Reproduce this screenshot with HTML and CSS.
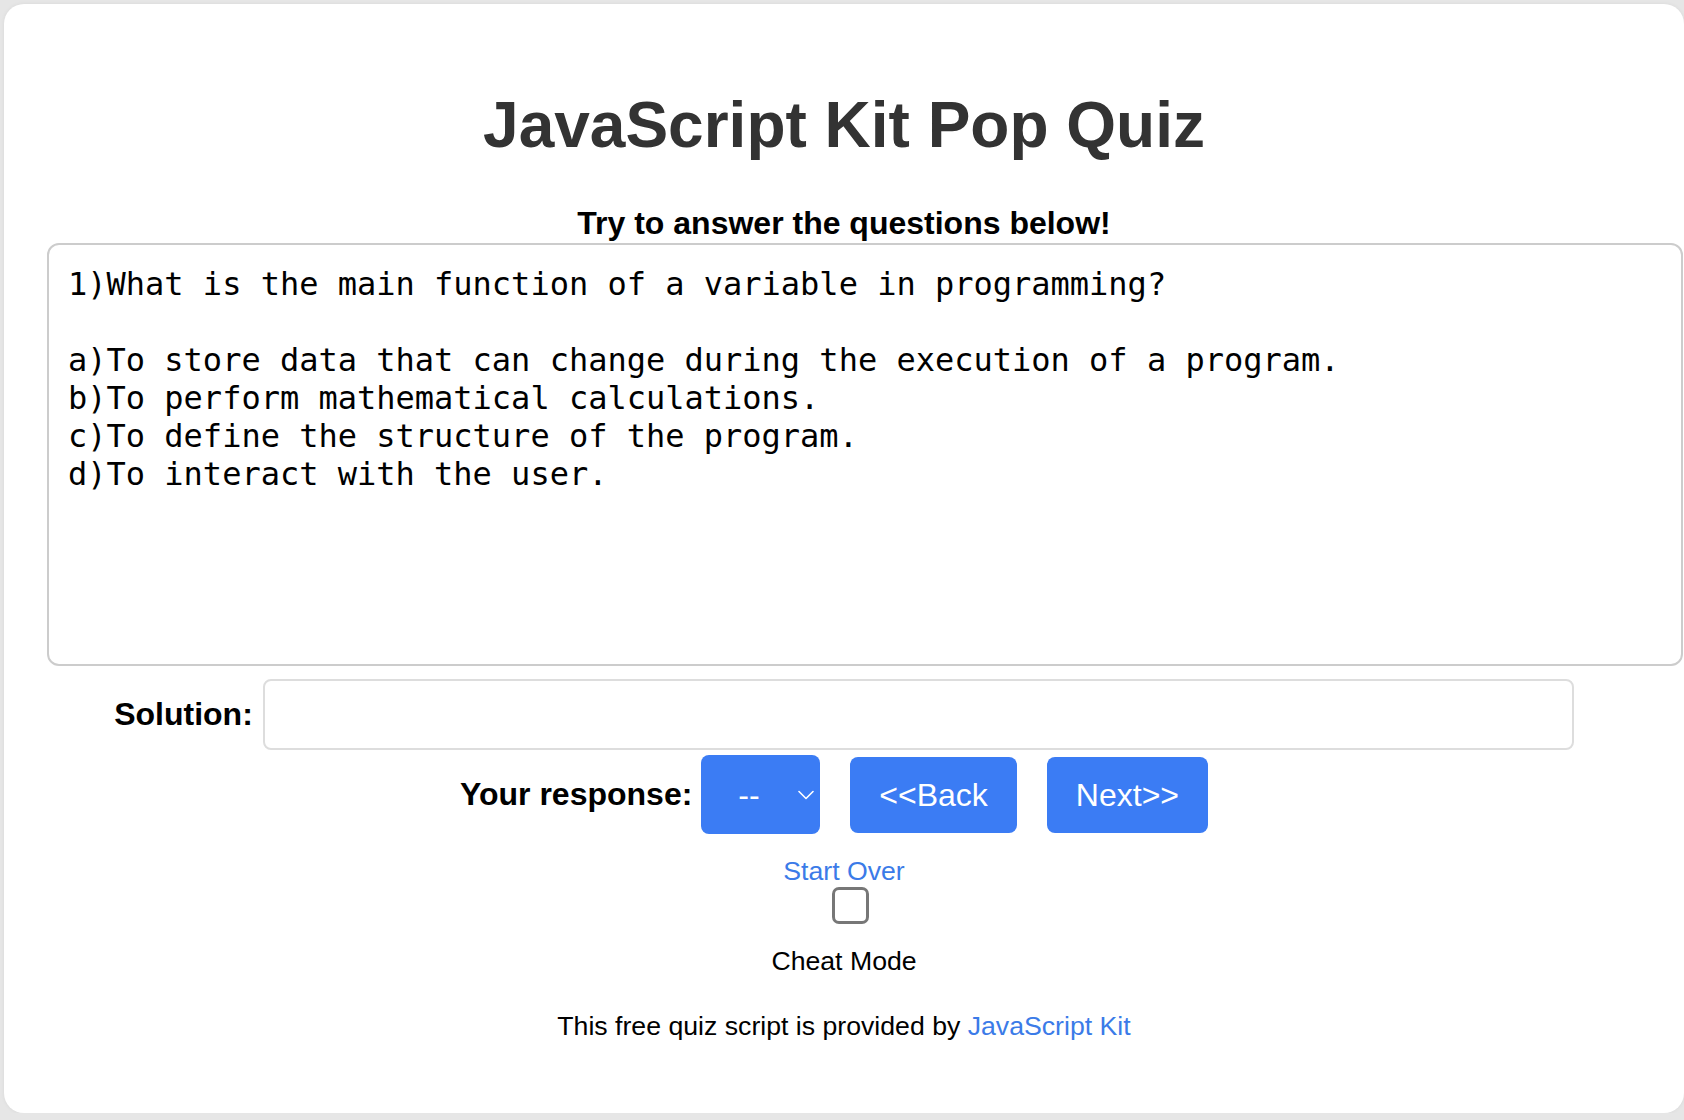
FILE: index.html
```html
<!DOCTYPE html>
<html lang="en">
<head>
<meta charset="utf-8">
<title>JavaScript Kit Pop Quiz</title>
<link rel="stylesheet" href="styles.css">
</head>
<body>
<div class="card">
  <h1 class="title">JavaScript Kit Pop Quiz</h1>
  <h3 class="subtitle">Try to answer the questions below!</h3>
  <textarea class="question" readonly>1)What is the main function of a variable in programming?

a)To store data that can change during the execution of a program.
b)To perform mathematical calculations.
c)To define the structure of the program.
d)To interact with the user.</textarea>
  <div class="solution-row">
    <label class="solution-label">Solution:</label>
    <input class="solution-input" type="text">
  </div>
  <div class="response-row">
    <span class="response-label">Your response:</span>
    <span class="select-wrap">
      <select class="response-select">
        <option>--</option>
        <option>a</option>
        <option>b</option>
        <option>c</option>
        <option>d</option>
      </select>
      <svg class="chevron" width="16" height="10" viewBox="0 0 16 10"><path d="M1 1.5 L8 8.5 L15 1.5" fill="none" stroke="#ffffff" stroke-width="1.6" stroke-linecap="round" stroke-linejoin="round"/></svg>
    </span>
    <button class="btn">&lt;&lt;Back</button>
    <button class="btn">Next&gt;&gt;</button>
  </div>
  <div class="start-over"><a href="#">Start Over</a></div>
  <div class="cheat-box"><input class="cheat" type="checkbox"></div>
  <div class="cheat-label">Cheat Mode</div>
  <div class="credit">This free quiz script is provided by <a href="#">JavaScript Kit</a></div>
</div>
</body>
</html>
```

FILE: styles.css
```css
html, body {
  margin: 0;
  padding: 0;
}
body {
  background: #e6e6e6;
  padding: 4px 0 0 4px;
  font-family: "Liberation Sans", Arial, Helvetica, sans-serif;
  overflow: hidden;
}
.card {
  width: 1680px;
  box-sizing: border-box;
  background: #ffffff;
  border-radius: 20px;
  box-shadow: 0 0 4px rgba(0, 0, 0, 0.06);
  padding: 83px 0 71px 0;
  text-align: center;
  color: #000;
}
.title {
  margin: 0;
  font-size: 64px;
  line-height: 76px;
  font-weight: bold;
  color: #333333;
}
.subtitle {
  margin: 42px 0 0 0;
  font-size: 32px;
  line-height: 37px;
  font-weight: bold;
  color: #000;
}
.question {
  display: block;
  margin: 1px 0 0 43px;
  width: 1636px;
  height: 423px;
  box-sizing: border-box;
  border: 2px solid #cccccc;
  border-radius: 12px;
  padding: 20px 17px 20px 19px;
  font-family: "DejaVu Sans Mono", "Liberation Mono", monospace;
  font-size: 32px;
  line-height: 38px;
  color: #000;
  background: #ffffff;
  resize: none;
  overflow: hidden;
  outline: none;
  text-align: left;
}
.solution-row {
  margin-top: 13px;
  display: flex;
  justify-content: center;
  align-items: center;
  gap: 10px;
}
.solution-label {
  font-size: 32px;
  line-height: 37px;
  font-weight: bold;
}
.solution-input {
  width: 1311px;
  height: 71px;
  box-sizing: border-box;
  border: 2px solid #dddddd;
  border-radius: 8px;
  margin: 0;
  padding: 0 12px;
  font-size: 32px;
  font-family: "Liberation Sans", Arial, sans-serif;
  outline: none;
}
.response-row {
  margin-top: 5px;
  display: flex;
  justify-content: center;
  align-items: center;
  padding-right: 20px;
}
.response-label {
  font-size: 32px;
  line-height: 37px;
  font-weight: bold;
  margin-right: 9px;
}
.select-wrap {
  position: relative;
  display: inline-block;
  height: 79px;
}
.response-select {
  -webkit-appearance: none;
  appearance: none;
  width: 119px;
  height: 79px;
  box-sizing: border-box;
  border: none;
  border-radius: 8px;
  background: #3b7cf4;
  color: #ffffff;
  font-family: "Liberation Sans", Arial, sans-serif;
  font-size: 32px;
  padding: 0 0 0 37px;
  margin: 0;
  outline: none;
}
.chevron {
  position: absolute;
  left: 97px;
  top: 35px;
  pointer-events: none;
}
.btn {
  margin: 0 0 0 30px;
  height: 76px;
  box-sizing: border-box;
  padding: 0 29px;
  border: none;
  border-radius: 8px;
  background: #3b7cf4;
  color: #ffffff;
  font-family: "Liberation Sans", Arial, sans-serif;
  font-size: 32px;
  line-height: 36px;
  cursor: pointer;
}
.start-over {
  margin-top: 22px;
  font-size: 26.67px;
  line-height: 31px;
}
.start-over a,
.credit a {
  color: #3b7be8;
  text-decoration: none;
}
.cheat-box {
  height: 38px;
  padding-left: 12px;
  display: flex;
  justify-content: center;
  align-items: flex-start;
}
.cheat {
  -webkit-appearance: none;
  appearance: none;
  width: 37px;
  height: 37px;
  box-sizing: border-box;
  margin: 0;
  border: 3px solid #777777;
  border-radius: 7px;
  background: #ffffff;
}
.cheat-label {
  margin-top: 21px;
  font-size: 26.67px;
  line-height: 31px;
}
.credit {
  margin-top: 34px;
  font-size: 26.67px;
  line-height: 31px;
}
```
